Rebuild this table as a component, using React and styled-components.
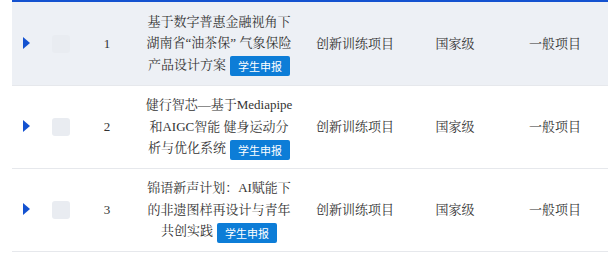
import React from "react";
import styled, { createGlobalStyle } from "styled-components";

const Global = createGlobalStyle`
  html, body { margin: 0; padding: 0; background: #fff; }
  body { font-family: "Liberation Serif", "Noto Serif CJK SC", serif; overflow: hidden; }
`;

const Wrap = styled.div`
  padding-left: 12px;
  width: 700px;
`;

const Table = styled.table`
  border-collapse: collapse;
  table-layout: fixed;
  width: 688px;
  border-top: 2px solid #1452d0;
  font-size: 13px;
  color: #333;
`;

const Col = styled.col`
  width: ${(p) => p.$w}px;
`;

const Row = styled.tr`
  background: ${(p) => (p.$active ? "#edf0f5" : "#fff")};
  border-bottom: 1px solid #e6e8ec;
`;

const Cell = styled.td`
  height: ${(p) => p.$h || 82}px;
  padding: 0 4px;
  text-align: center;
  vertical-align: middle;
  line-height: 21.5px;
`;

const TitleCell = styled(Cell)`
  padding: 0 12px;
`;

const Arrow = styled.span`
  display: inline-block;
  width: 0;
  height: 0;
  border-top: 6px solid transparent;
  border-bottom: 6px solid transparent;
  border-left: 7px solid #1452d0;
  vertical-align: middle;
  margin-bottom: 4px;
`;

const Check = styled.span`
  display: inline-block;
  width: 18px;
  height: 18px;
  border-radius: 3px;
  background: #e9ecf1;
  vertical-align: middle;
  margin-bottom: 2px;
`;

const Tag = styled.span`
  display: inline-block;
  background: #0d7dd7;
  color: #fff;
  font-family: "Noto Sans CJK SC", sans-serif;
  font-size: 11px;
  line-height: 20px;
  height: 20px;
  padding: 0 8px;
  border-radius: 2px;
  margin-left: 4px;
  vertical-align: middle;
`;

const widths = [28, 42, 50, 174, 98, 102, 98, 96];

const rows = [
  { n: 1, title: "基于数字普惠金融视角下湖南省“油茶保” 气象保险产品设计方案", h: 83 },
  { n: 2, title: "健行智芯—基于Mediapipe和AIGC智能 健身运动分析与优化系统", h: 82 },
  { n: 3, title: "锦语新声计划：AI赋能下的非遗图样再设计与青年共创实践", h: 82 },
];

export default function App() {
  return (
    <>
      <Global />
      <Wrap>
        <Table>
          <colgroup>
            {widths.map((w, i) => (
              <Col key={i} $w={w} />
            ))}
          </colgroup>
          <tbody>
            {rows.map((r, i) => (
              <Row key={r.n} $active={i === 0}>
                <Cell $h={r.h}><Arrow /></Cell>
                <Cell><Check /></Cell>
                <Cell>{r.n}</Cell>
                <TitleCell>
                  {r.title}
                  <Tag>学生申报</Tag>
                </TitleCell>
                <Cell>创新训练项目</Cell>
                <Cell>国家级</Cell>
                <Cell>一般项目</Cell>
                <Cell />
              </Row>
            ))}
          </tbody>
        </Table>
      </Wrap>
    </>
  );
}
